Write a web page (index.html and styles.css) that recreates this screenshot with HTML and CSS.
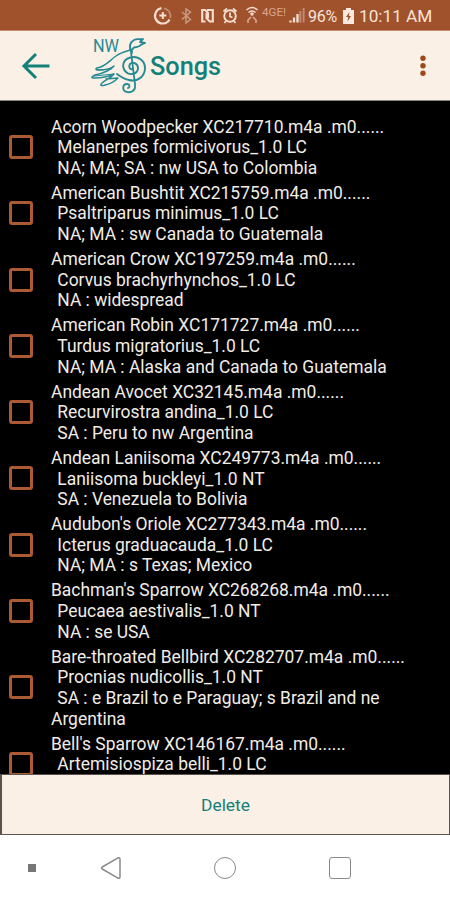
FILE: index.html
```html
<!DOCTYPE html>
<html lang="en">
<head>
    <meta charset="UTF-8">
    <meta name="viewport" content="width=device-width, initial-scale=1.0">
    <title>Songs</title>
    <link rel="stylesheet" href="styles.css">
</head>
<body>
    <div class="status-bar">
        <svg class="status-icons" width="160" height="30" viewBox="0 0 160 30" fill="none" stroke="#f6dfd2">
            <!-- data saver -->
            <path d="M16.5 8.2A7.7 7.7 0 1 0 24.5 19.5" stroke-width="2.2"/>
            <path d="M19 8.4a7.7 7.7 0 0 1 6.2 9.6" stroke-width="1.8" opacity=".4"/>
            <path d="M17.8 12v7M14.3 15.5h7" stroke-width="2"/>
            <!-- bluetooth -->
            <path d="M37 12l8.500 7.500-4.500 3.500V9l4.500 3L37 19.500" stroke-width="1.500" opacity=".5"/>
            <!-- nfc -->
            <path d="M60.500 21.500h-3.300V10h3l2.800 3v5M62 10h5.800v11.500h-3l-3.300-3.500v-5" stroke-width="2.100"/>
            <!-- alarm -->
            <circle cx="85" cy="16" r="5.800" stroke-width="1.900"/>
            <path d="M85 12.500v4l2.500 1M78.500 11.500l3.500-3M91.500 11.500L88 8.500M81 21l-1.500 2M89 21l1.500 2" stroke-width="1.700"/>
            <!-- wifi -->
            <path d="M101.500 10q5.500-5 11 0M103.500 12.500q3.500-3 7 0" stroke-width="1.500"/>
            <circle cx="107" cy="14" r="1" stroke-width="1.500"/>
            <path d="M103 23v-3l3-3M111 23v-3l-3-3" stroke-width="1.500" opacity=".65"/>
            <!-- signal -->
            <path d="M145.500 22.500v-2M149 22.500v-5M152.500 22.500V14" stroke-width="2.300"/>
            <path d="M155.300 22.500V11M158.600 22.500V8" stroke-width="2" opacity=".4"/>
            <text class="network" x="117" y="16" textLength="24" lengthAdjust="spacingAndGlyphs">4GE!</text>
        </svg>
        <span class="percent">96%</span>
        <svg class="battery" width="11" height="16" viewBox="0 0 11 16">
            <path d="M3 0h5v2h3v14H0V2h3z" fill="#fbe9df"/>
            <path d="M6.500 4L3 9h2.200L4.500 13.500 8 8H5.800z" fill="#a0522d"/>
        </svg>
        <span class="clock">10:11 AM</span>
    </div>

    <div class="toolbar">
        <svg class="back" width="30" height="28" viewBox="0 0 30 28" fill="none" stroke="#13807a" stroke-width="3">
            <path d="M28.500 14H3M15 2L3 14l12 12"/>
        </svg>
        <svg class="logo" width="60" height="62" viewBox="0 0 60 62" fill="none" stroke="#258a93" stroke-width="1.500" stroke-linecap="round" stroke-linejoin="round">
            <text class="logo-text" x="3" y="18" textLength="26" lengthAdjust="spacingAndGlyphs">NW</text>
            <!-- bird head and clef stem -->
            <path d="M55 9c-3 0-4 3-8 4-4 0-6 2-5 6M55 9l-5-1 3-3c-4 1-5-1-9 1-5 3-5 7-3 12l4 32c1 7-4 9-8 8-5-1-5-8 0-8 3 0 3 4 1 4" stroke-width="1.800"/>
            <!-- clef spiral -->
            <path d="M43 35c-3 1-5-2-3-5 3-3 8 0 8 4 0 6-8 8-12 4-5-5-3-12 3-14 8-3 16 2 16 10 0 9-8 14-16 12-5-1-9-4-12-6" stroke-width="1.900"/>
            <!-- wing -->
            <path d="M43 15c-5 2-12 3-17 7-7 5-11 11-19 12-2 1-1 2 2 2 5 0 11-1 15-4-4 5-10 7-19 9-4 2-4 3-1 3 7 0 14-1 20-4-4 5-9 6-12 9-3 3 0 3 3 2 6-1 10-4 13-7l-12 1"/>
            <path d="M9 36l12-1M4 42l20-2" stroke-width="1.200"/>
        </svg>
        <span class="title">Songs</span>
        <svg class="more" width="6" height="22" viewBox="0 0 6 22" fill="#9c4a1d">
            <circle cx="3" cy="3.300" r="2.700"/>
            <circle cx="3" cy="10.800" r="2.700"/>
            <circle cx="3" cy="18.300" r="2.700"/>
        </svg>
    </div>

    <div class="list">
        <div class="row">
            <span class="check"></span>
            <div class="song">
                <p>Acorn Woodpecker XC217710.m4a .m0......</p>
                <p class="sub">Melanerpes formicivorus_1.0 LC</p>
                <p class="sub">NA; MA; SA : nw USA to Colombia</p>
            </div>
        </div>
        <div class="row">
            <span class="check"></span>
            <div class="song">
                <p>American Bushtit XC215759.m4a .m0......</p>
                <p class="sub">Psaltriparus minimus_1.0 LC</p>
                <p class="sub">NA; MA : sw Canada to Guatemala</p>
            </div>
        </div>
        <div class="row">
            <span class="check"></span>
            <div class="song">
                <p>American Crow XC197259.m4a .m0......</p>
                <p class="sub">Corvus brachyrhynchos_1.0 LC</p>
                <p class="sub">NA : widespread</p>
            </div>
        </div>
        <div class="row">
            <span class="check"></span>
            <div class="song">
                <p>American Robin XC171727.m4a .m0......</p>
                <p class="sub">Turdus migratorius_1.0 LC</p>
                <p class="sub">NA; MA : Alaska and Canada to Guatemala</p>
            </div>
        </div>
        <div class="row">
            <span class="check"></span>
            <div class="song">
                <p>Andean Avocet XC32145.m4a .m0......</p>
                <p class="sub">Recurvirostra andina_1.0 LC</p>
                <p class="sub">SA : Peru to nw Argentina</p>
            </div>
        </div>
        <div class="row">
            <span class="check"></span>
            <div class="song">
                <p>Andean Laniisoma XC249773.m4a .m0......</p>
                <p class="sub">Laniisoma buckleyi_1.0 NT</p>
                <p class="sub">SA : Venezuela to Bolivia</p>
            </div>
        </div>
        <div class="row">
            <span class="check"></span>
            <div class="song">
                <p>Audubon's Oriole XC277343.m4a .m0......</p>
                <p class="sub">Icterus graduacauda_1.0 LC</p>
                <p class="sub">NA; MA : s Texas; Mexico</p>
            </div>
        </div>
        <div class="row">
            <span class="check"></span>
            <div class="song">
                <p>Bachman's Sparrow XC268268.m4a .m0......</p>
                <p class="sub">Peucaea aestivalis_1.0 NT</p>
                <p class="sub">NA : se USA</p>
            </div>
        </div>
        <div class="row">
            <span class="check"></span>
            <div class="song">
                <p>Bare-throated Bellbird XC282707.m4a .m0......</p>
                <p class="sub">Procnias nudicollis_1.0 NT</p>
                <p class="sub">SA : e Brazil to e Paraguay; s Brazil and ne Argentina</p>
            </div>
        </div>
        <div class="row">
            <span class="check"></span>
            <div class="song">
                <p>Bell's Sparrow XC146167.m4a .m0......</p>
                <p class="sub">Artemisiospiza belli_1.0 LC</p>
                <p class="sub">&nbsp;</p>
            </div>
        </div>
    </div>

    <button class="delete">Delete</button>

    <div class="nav-bar">
        <span class="dot"></span>
        <svg class="nav-back" width="22" height="24" viewBox="0 0 22 24" fill="none" stroke="#8a8a8a" stroke-width="1.500" stroke-linejoin="round">
            <path d="M18 1.800L2.200 11Q1 12 2.200 13L18 22.200Q20 22.800 20 21V3Q20 1.200 18 1.800z"/>
        </svg>
        <span class="nav-home"></span>
        <span class="nav-recent"></span>
    </div>
</body>
</html>
```
FILE: styles.css
```css
* {
    box-sizing: border-box;
}
body {
    margin: 0;
    height: 900px;
    display: flex;
    flex-direction: column;
    overflow: hidden;
    background-color: #fff;
    font-family: Roboto, "Liberation Sans", sans-serif;
}
.status-bar {
    height: 31px;
    flex: none;
    display: flex;
    align-items: center;
    padding-left: 145px;
    background-color: #a0522d;
    border-bottom: 1px solid #c98d6c;
    color: #f8e3d8;
    font-size: 16px;
    white-space: nowrap;
}
.status-icons {
    flex: none;
}
.network {
    font-size: 10px;
    fill: #d8a58c;
    stroke: none;
}
.percent {
    width: 31px;
    margin-left: 3px;
    padding-top: 2px;
    font-size: 16px;
    letter-spacing: -0.2px;
}
.battery {
    margin: 2px 5px 0 4px;
}
.clock {
    padding-top: 2px;
    font-size: 17.2px;
}
.toolbar {
    height: 70px;
    flex: none;
    display: flex;
    align-items: center;
    padding: 0 24px 0 21px;
    background-color: #faf0e6;
    border-bottom: 1px solid #8b857f;
}
.logo {
    margin-left: 39px;
    margin-bottom: 1px;
}
.logo-text {
    font-size: 19px;
    fill: #258a93;
    stroke: none;
}
.title {
    padding-top: 1px;
    color: #13807a;
    font-size: 25.3px;
    font-weight: 500;
}
.more {
    margin-left: auto;
}
.list {
    flex: none;
    height: 673px;
    padding-top: 15.5px;
    overflow: hidden;
    background-color: #000;
    color: #f2ece6;
}
.row {
    display: flex;
    align-items: center;
    padding-bottom: 4.25px;
}
.check {
    width: 24px;
    height: 24px;
    flex: none;
    margin: 0 18px 1px 9px;
    border: 3px solid #ab5a33;
    border-radius: 3px;
}
.song {
    width: 370px;
    font-size: 17.45px;
    line-height: 20.67px;
}
.song p {
    margin: 0;
}
.song .sub {
    text-indent: 6.3px;
}
.delete {
    height: 61px;
    flex: none;
    padding: 0;
    background-color: #faf0e6;
    border: 1px solid #5c5350;
    border-width: 1px 1px 1px 2px;
    color: #13807a;
    font-family: inherit;
    font-size: 17.4px;
}
.nav-bar {
    flex: 1;
    display: flex;
    align-items: center;
    padding-left: 28px;
}
.dot {
    width: 8px;
    height: 8px;
    background-color: #777;
}
.nav-back {
    margin-left: 64px;
}
.nav-home,
.nav-recent {
    width: 22px;
    height: 22px;
    border: 1.5px solid #8a8a8a;
}
.nav-home {
    margin-left: 92px;
    border-radius: 50%;
}
.nav-recent {
    margin-left: 93px;
    border-radius: 3px;
}
```
